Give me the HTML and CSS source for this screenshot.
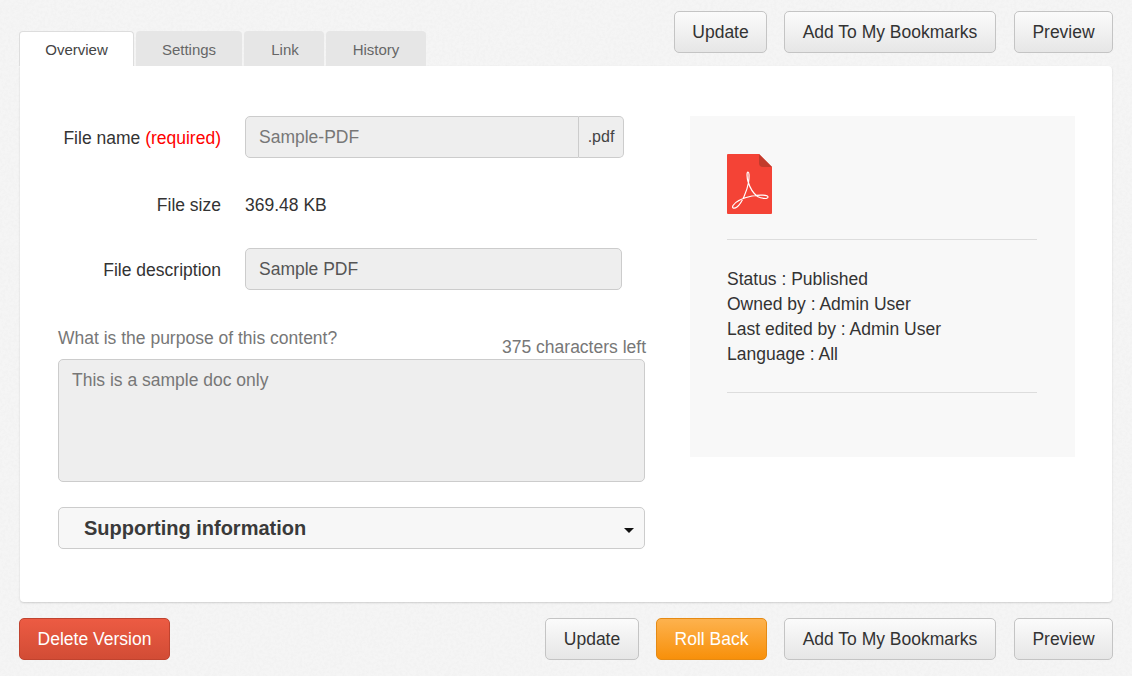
FILE: index.html
```html
<!DOCTYPE html>
<html lang="en">
<head>
<meta charset="utf-8">
<title>Overview</title>
<link rel="stylesheet" href="styles.css">
</head>
<body>
<div class="page">
  <header class="topbar">
    <nav class="tabs">
      <a class="tab tab-active">Overview</a>
      <a class="tab tab-settings">Settings</a>
      <a class="tab tab-link">Link</a>
      <a class="tab tab-history">History</a>
    </nav>
    <div class="actions">
      <button class="btn btn-update">Update</button>
      <button class="btn btn-bookmark">Add To My Bookmarks</button>
      <button class="btn btn-preview">Preview</button>
    </div>
  </header>
  <main class="panel">
    <section class="form">
      <div class="row row-name">
        <label class="label label-low">File name <span class="req">(required)</span></label>
        <div class="input-group">
          <div class="field field-name">Sample-PDF</div>
          <div class="addon">.pdf</div>
        </div>
      </div>
      <div class="row row-size">
        <label class="label">File size</label>
        <div class="value">369.48 KB</div>
      </div>
      <div class="row row-desc">
        <label class="label label-low">File description</label>
        <div class="field field-desc">Sample PDF</div>
      </div>
      <div class="purpose-head">
        <span class="purpose-label">What is the purpose of this content?</span>
        <span class="counter">375 characters left</span>
      </div>
      <div class="textarea">This is a sample doc only</div>
      <div class="accordion">
        <span class="accordion-title">Supporting information</span>
        <span class="caret"></span>
      </div>
    </section>
    <aside class="info">
      <svg class="file-icon" width="45" height="60" viewBox="0 0 45 60" aria-hidden="true">
        <path d="M1 0H32L45 13V59a1 1 0 0 1-1 1H1a1 1 0 0 1-1-1V1a1 1 0 0 1 1-1z" fill="#f44336"/>
        <path d="M32 0L45 13V13H36a4 4 0 0 1-4-4z" fill="#c23b2c"/>
        <path d="M6 51.500c-1.500 3 1.500 3.500 4 1.500C15 49 20 37 21.500 28.500C22.500 21 22 18 21 18C19.500 18 20 24 21 27.500C23 34 27 40 30.500 42.500C34 44.500 41 45.500 41 43C41 41 33 40.500 25 42C18 43.500 9 47 6 51.500z" fill="none" stroke="#fff" stroke-width="1.200"/>
      </svg>
      <hr class="rule rule-top">
      <ul class="meta">
        <li>Status : Published</li>
        <li>Owned by : Admin User</li>
        <li>Last edited by : Admin User</li>
        <li>Language : All</li>
      </ul>
      <hr class="rule rule-bottom">
    </aside>
  </main>
  <footer class="bottombar">
    <button class="btn btn-danger">Delete Version</button>
    <div class="actions">
      <button class="btn btn-update-b">Update</button>
      <button class="btn btn-warning">Roll Back</button>
      <button class="btn btn-bookmark">Add To My Bookmarks</button>
      <button class="btn btn-preview">Preview</button>
    </div>
  </footer>
</div>
</body>
</html>
```
FILE: styles.css
```css
* { box-sizing: border-box; }
html, body { margin: 0; padding: 0; }
body {
  background-color: #f5f5f5;
  background-image: url("data:image/svg+xml,%3Csvg xmlns='http://www.w3.org/2000/svg' width='240' height='240'%3E%3Cfilter id='n'%3E%3CfeTurbulence type='fractalNoise' baseFrequency='.35' numOctaves='3' stitchTiles='stitch'/%3E%3CfeColorMatrix values='0 0 0 0 .55 0 0 0 0 .55 0 0 0 0 .55 .12 .12 0 0 -.1'/%3E%3C/filter%3E%3Crect width='240' height='240' filter='url(%23n)'/%3E%3C/svg%3E");
  font-family: "Liberation Sans", Arial, sans-serif;
  font-size: 17.5px;
  color: #333;
  overflow: hidden;
}
.page { width: 1132px; height: 676px; padding: 11px 19px 0 19px; }

.topbar { display: flex; justify-content: space-between; height: 55px; }
.tabs { display: flex; align-self: flex-end; gap: 2px; }
.tab {
  display: block;
  height: 35px;
  line-height: 37px;
  font-size: 15px;
  text-align: center;
  color: #666;
  background: #e6e6e6;
  border-radius: 4px 4px 0 0;
}
.tab-active {
  width: 115px;
  color: #444;
  background: #fff;
  border: 1px solid #ddd;
  border-bottom: 0;
  line-height: 35px;
}
.tab-settings { width: 106px; }
.tab-link { width: 80px; padding-left: 2px; }
.tab-history { width: 100px; }

.actions { display: flex; gap: 17px; align-self: flex-start; }
.btn {
  display: block;
  height: 42px;
  padding: 0;
  font: 17.5px "Liberation Sans", Arial, sans-serif;
  color: #333;
  background: linear-gradient(#fbfbfb, #e6e6e6);
  border: 1px solid #c4c4c4;
  border-radius: 5px;
  text-align: center;
}
.btn-update { width: 93px; }
.btn-bookmark { width: 212px; }
.btn-preview { width: 99px; margin-left: 1px; }
.btn-update-b { width: 94px; }
.btn-danger {
  width: 151px;
  color: #fff;
  background: linear-gradient(#ec5b43, #d24c35);
  border-color: #c0432f;
}
.btn-warning {
  width: 111px;
  color: #fff;
  background: linear-gradient(#fdb24e, #f8900a);
  border-color: #e58a14;
}

.panel {
  display: flex;
  justify-content: space-between;
  height: 536px;
  margin-left: 1px;
  margin-right: 1px;
  padding: 50px 37px 0 38px;
  background: #fff;
  border-radius: 0 4px 4px 4px;
  box-shadow: 0 1px 2px rgba(0, 0, 0, .16);
}
.form { width: 588px; }
.row { display: flex; align-items: center; }
.row-name { height: 42px; }
.row-size { height: 42px; margin-top: 26px; }
.row-desc { height: 42px; margin-top: 22px; }
.label { width: 163px; text-align: right; flex: none; margin-right: 24px; }
.label-low { padding-top: 2px; }
.req { color: #f00; }
.value { color: #333; }

.input-group { display: flex; }
.field {
  height: 42px;
  line-height: 40px;
  padding: 0 13px;
  color: #777;
  background: #eee;
  border: 1px solid #ccc;
  border-radius: 5px;
}
.field-name { width: 334px; border-radius: 5px 0 0 5px; }
.addon {
  width: 45px;
  height: 42px;
  line-height: 40px;
  font-size: 16px;
  text-align: center;
  color: #444;
  background: #eee;
  border: 1px solid #ccc;
  border-left: 0;
  border-radius: 0 5px 5px 0;
}
.field-desc { width: 377px; color: #555; }

.purpose-head {
  display: flex;
  justify-content: space-between;
  height: 69px;
  padding-top: 38px;
  line-height: 21px;
  color: #777;
}
.counter { padding-top: 9px; }
.textarea {
  width: 587px;
  height: 123px;
  padding: 10px 13px;
  line-height: 21px;
  color: #777;
  background: #eee;
  border: 1px solid #ccc;
  border-radius: 5px;
}
.accordion {
  display: flex;
  align-items: center;
  justify-content: space-between;
  width: 587px;
  height: 42px;
  margin-top: 25px;
  padding: 0 10px 0 25px;
  background: #f7f7f7;
  border: 1px solid #ccc;
  border-radius: 5px;
}
.accordion-title { font-size: 20px; font-weight: 700; color: #3a3a3a; }
.caret {
  width: 0;
  height: 0;
  margin-top: 4px;
  border-left: 5px solid transparent;
  border-right: 5px solid transparent;
  border-top: 5px solid #111;
}

.info {
  width: 385px;
  height: 341px;
  padding: 38px 38px 0 37px;
  background: #f8f8f8;
}
.file-icon { display: block; }
.rule { height: 1px; margin: 0; border: 0; background: #ddd; }
.rule-top { margin-top: 25px; }
.rule-bottom { margin-top: 25px; }
.meta { list-style: none; margin: 27px 0 0; padding: 0; line-height: 25px; }

.bottombar { display: flex; justify-content: space-between; margin-top: 16px; }
```
